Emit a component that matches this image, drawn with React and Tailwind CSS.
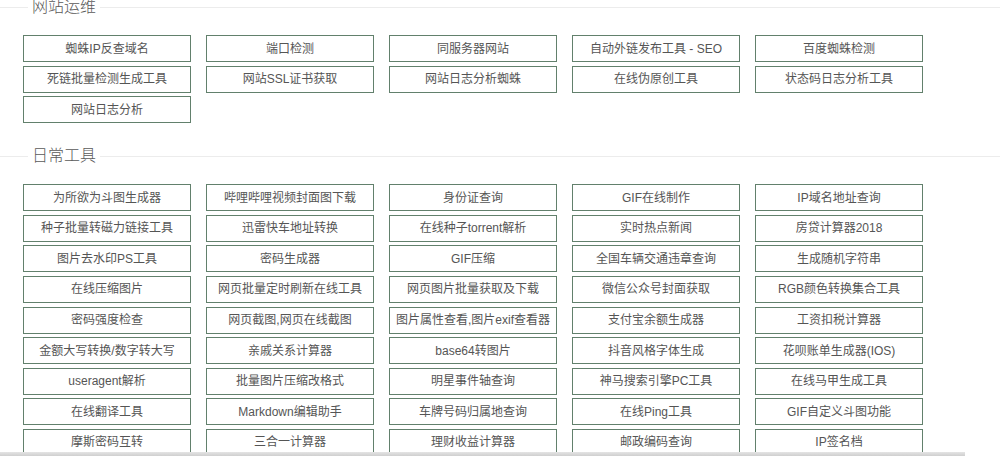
import React from "react";

const sections = [
  {
    title: "网站运维",
    tools: [
      "蜘蛛IP反查域名",
      "端口检测",
      "同服务器网站",
      "自动外链发布工具 - SEO",
      "百度蜘蛛检测",
      "死链批量检测生成工具",
      "网站SSL证书获取",
      "网站日志分析蜘蛛",
      "在线伪原创工具",
      "状态码日志分析工具",
      "网站日志分析",
    ],
  },
  {
    title: "日常工具",
    tools: [
      "为所欲为斗图生成器",
      "哔哩哔哩视频封面图下载",
      "身份证查询",
      "GIF在线制作",
      "IP域名地址查询",
      "种子批量转磁力链接工具",
      "迅雷快车地址转换",
      "在线种子torrent解析",
      "实时热点新闻",
      "房贷计算器2018",
      "图片去水印PS工具",
      "密码生成器",
      "GIF压缩",
      "全国车辆交通违章查询",
      "生成随机字符串",
      "在线压缩图片",
      "网页批量定时刷新在线工具",
      "网页图片批量获取及下载",
      "微信公众号封面获取",
      "RGB颜色转换集合工具",
      "密码强度检查",
      "网页截图,网页在线截图",
      "图片属性查看,图片exif查看器",
      "支付宝余额生成器",
      "工资扣税计算器",
      "金额大写转换/数字转大写",
      "亲戚关系计算器",
      "base64转图片",
      "抖音风格字体生成",
      "花呗账单生成器(IOS)",
      "useragent解析",
      "批量图片压缩改格式",
      "明星事件轴查询",
      "神马搜索引擎PC工具",
      "在线马甲生成工具",
      "在线翻译工具",
      "Markdown编辑助手",
      "车牌号码归属地查询",
      "在线Ping工具",
      "GIF自定义斗图功能",
      "摩斯密码互转",
      "三合一计算器",
      "理财收益计算器",
      "邮政编码查询",
      "IP签名档",
    ],
  },
];

// fieldset-ish heading: thin rule on both sides of the title
const SectionTitle = ({ children }) => (
  <div className="flex items-center h-4">
    <div className="w-[28px] h-px bg-[#ececec]" />
    <span className="px-[4px] text-[16px] leading-4 text-[#5a5a5a] font-light">{children}</span>
    <div className="flex-1 h-px bg-[#ececec]" />
  </div>
);

const ToolButton = ({ label }) => (
  <a
    href="#"
    className="flex items-center justify-center h-[27px] border border-[#62806c] text-[12px] text-[#555] bg-white whitespace-nowrap"
  >
    {label}
  </a>
);

export default function App() {
  return (
    <div
      className="relative w-[1000px] h-[456px] overflow-hidden bg-white"
      style={{ fontFamily: '"Liberation Sans", "Noto Sans CJK SC", sans-serif' }}
    >
      <div className="-mt-px flex flex-col gap-[25px]">
        {sections.map((s) => (
          <section key={s.title}>
            <SectionTitle>{s.title}</SectionTitle>
            <div className="mt-[20px] pl-[23px] grid grid-cols-[repeat(5,168px)] gap-x-[15px] gap-y-[3.6px]">
              {s.tools.map((t) => (
                <ToolButton key={t} label={t} />
              ))}
            </div>
          </section>
        ))}
      </div>
      {/* scrollbar edge peeking in at the bottom */}
      <div className="absolute left-0 bottom-0 w-[965px] h-[4px] bg-gradient-to-b from-[#e4e4e4] to-[#cfcfcf]" />
    </div>
  );
}
